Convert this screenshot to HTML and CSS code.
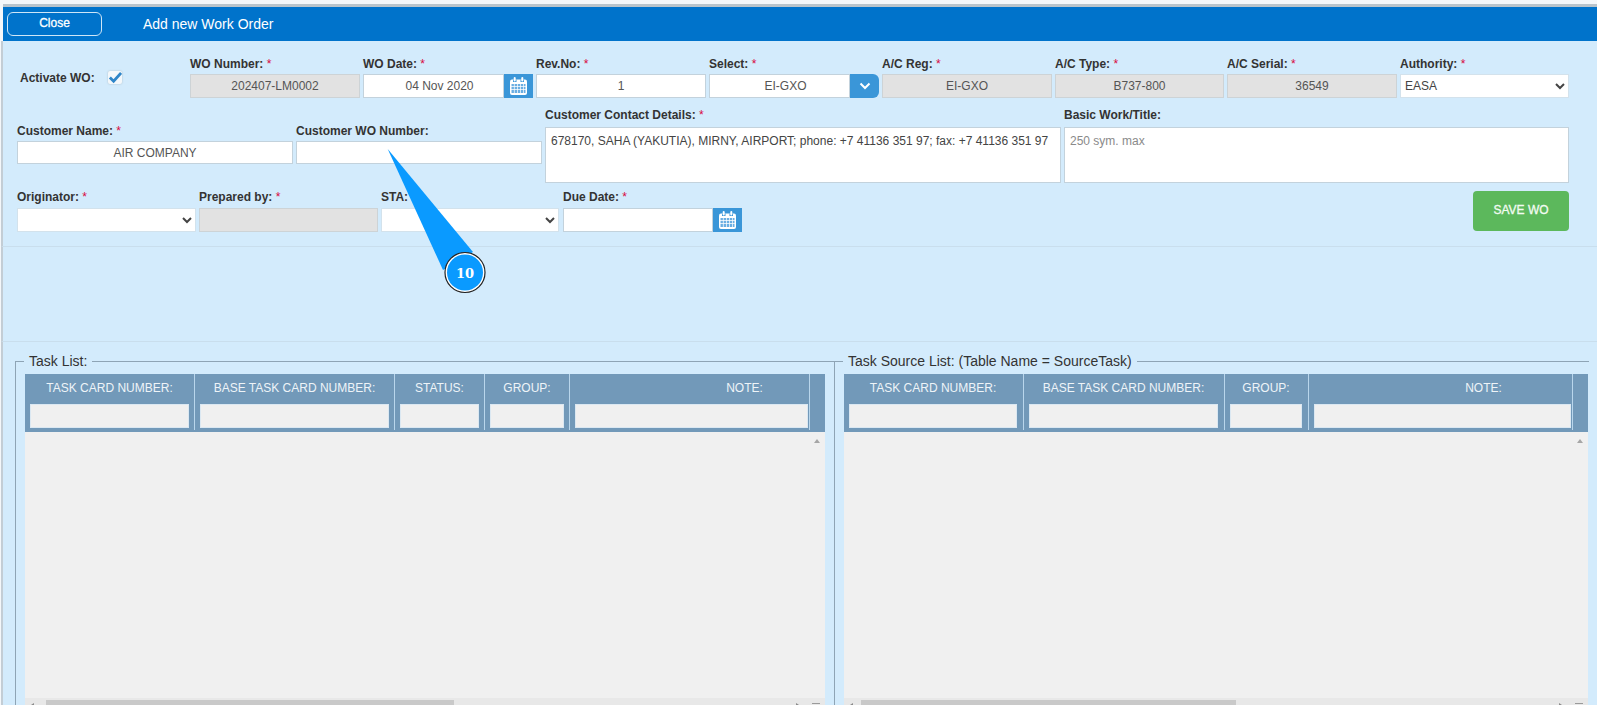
FILE: index.html
```html
<!DOCTYPE html>
<html lang="en">
<head>
<meta charset="utf-8">
<title>Add new Work Order</title>
<link rel="stylesheet" href="styles.css">
</head>
<body>
<div class="page">
  <svg width="0" height="0" class="defs" aria-hidden="true">
    <symbol id="cal" viewBox="0 0 17 18">
      <rect x="0" y="2.500" width="17" height="15.500" rx="2" fill="#fff"/>
      <path fill="#3a96d8" d="M3 2.500h3.500V5H3ZM10.500 2.500H14V5h-3.500Z"/>
      <path fill="#6aaee2" d="M1.500 7h2.400v2.300H1.500Zm3.100 0H7v2.300H4.600Zm3.100 0h2.400v2.300H7.700Zm3.100 0h2.400v2.300h-2.400Zm3.100 0h1.600v2.300h-1.600ZM1.500 10h2.400v2.300H1.500Zm3.100 0H7v2.300H4.600Zm3.100 0h2.400v2.300H7.700Zm3.100 0h2.400v2.300h-2.400Zm3.100 0h1.600v2.300h-1.600ZM1.500 13h2.400v3H1.500Zm3.100 0H7v3H4.600Zm3.100 0h2.400v3H7.700Zm3.100 0h2.400v3h-2.400Zm3.100 0h1.600v3h-1.600Z"/>
      <rect x="3.700" y="0" width="2" height="4.500" rx="1" fill="#fff"/>
      <rect x="11.300" y="0" width="2" height="4.500" rx="1" fill="#fff"/>
    </symbol>
  </svg>

  <header class="topbar">
    <button class="close-btn" type="button">Close</button>
    <h1 class="title">Add new Work Order</h1>
  </header>

  <form class="form">
    <div class="row-one">
      <div class="activate">
        <span class="label">Activate WO:</span>
        <span class="check">
          <svg width="15" height="13" viewBox="0 0 15 13"><path d="M2 6.500 6 10.500 14 1.500" fill="none" stroke="#2f86c9" stroke-width="3"/></svg>
        </span>
      </div>
      <div class="fields-eight">
        <div class="field"><label class="label">WO Number: <i>*</i></label><input class="ctl ro" value="202407-LM0002" readonly></div>
        <div class="field"><label class="label">WO Date: <i>*</i></label>
          <div class="group"><input class="ctl" value="04 Nov 2020"><span class="addon"><svg width="17" height="18"><use href="#cal"/></svg></span></div></div>
        <div class="field"><label class="label">Rev.No: <i>*</i></label><input class="ctl" value="1"></div>
        <div class="field"><label class="label">Select: <i>*</i></label>
          <div class="group"><input class="ctl" value="EI-GXO"><span class="addon addon-round"><svg width="12" height="8" viewBox="0 0 12 8"><path d="M1.500 1.500 6 6l4.500-4.500" fill="none" stroke="#fff" stroke-width="2"/></svg></span></div></div>
        <div class="field"><label class="label">A/C Reg: <i>*</i></label><input class="ctl ro" value="EI-GXO" readonly></div>
        <div class="field"><label class="label">A/C Type: <i>*</i></label><input class="ctl ro" value="B737-800" readonly></div>
        <div class="field"><label class="label">A/C Serial: <i>*</i></label><input class="ctl ro" value="36549" readonly></div>
        <div class="field"><label class="label">Authority: <i>*</i></label><select class="ctl sel"><option>EASA</option></select></div>
      </div>
    </div>

    <div class="row-two">
      <div class="field low w-name"><label class="label">Customer Name: <i>*</i></label><input class="ctl slim" value="AIR COMPANY"></div>
      <div class="field low w-cwo"><label class="label">Customer WO Number:</label><input class="ctl slim"></div>
      <div class="field w-contact"><label class="label label-wide">Customer Contact Details: <i>*</i></label><textarea class="area">678170, SAHA (YAKUTIA), MIRNY, AIRPORT; phone: +7 41136 351 97; fax: +7 41136 351 97</textarea></div>
      <div class="field w-basic"><label class="label label-wide">Basic Work/Title:</label><textarea class="area" placeholder="250 sym. max"></textarea></div>
    </div>

    <div class="row-three">
      <div class="field w-orig"><label class="label">Originator: <i>*</i></label><select class="ctl sel"><option></option></select></div>
      <div class="field w-prep"><label class="label">Prepared by: <i>*</i></label><input class="ctl ro" readonly></div>
      <div class="field w-sta"><label class="label">STA:</label><select class="ctl sel"><option></option></select></div>
      <div class="field w-due"><label class="label">Due Date: <i>*</i></label>
        <div class="group"><input class="ctl"><span class="addon"><svg width="17" height="18"><use href="#cal"/></svg></span></div></div>
      <button class="save-btn" type="button">SAVE WO</button>
    </div>
  </form>

  <div class="spacer"></div>

  <section class="lists">
    <fieldset class="box box-tasks">
      <legend>Task List:</legend>
      <div class="panel">
        <div class="grid-head head-tasks">
          <div class="cell"><span class="cap">TASK CARD NUMBER:</span><span class="filter"></span></div>
          <div class="cell"><span class="cap">BASE TASK CARD NUMBER:</span><span class="filter"></span></div>
          <div class="cell"><span class="cap">STATUS:</span><span class="filter"></span></div>
          <div class="cell"><span class="cap">GROUP:</span><span class="filter"></span></div>
          <div class="cell cell-note"><span class="cap cap-note">NOTE:</span><span class="filter"></span></div>
          <div></div>
        </div>
        <div class="grid-body">
          <span class="arrow-up"></span>
          <div class="hscroll">
            <span class="thumb thumb-tasks"></span>
            <span class="arrow-left"></span>
            <span class="arrow-right"></span>
            <span class="corner"></span>
          </div>
        </div>
      </div>
    </fieldset>
    <fieldset class="box box-source">
      <legend>Task Source List: (Table Name = SourceTask)</legend>
      <div class="panel">
        <div class="grid-head head-source">
          <div class="cell"><span class="cap">TASK CARD NUMBER:</span><span class="filter"></span></div>
          <div class="cell"><span class="cap">BASE TASK CARD NUMBER:</span><span class="filter"></span></div>
          <div class="cell"><span class="cap">GROUP:</span><span class="filter"></span></div>
          <div class="cell cell-note"><span class="cap cap-note-src">NOTE:</span><span class="filter"></span></div>
          <div></div>
        </div>
        <div class="grid-body">
          <span class="arrow-up"></span>
          <div class="hscroll">
            <span class="thumb thumb-source"></span>
            <span class="arrow-left"></span>
            <span class="arrow-right"></span>
            <span class="corner"></span>
          </div>
        </div>
      </div>
    </fieldset>
  </section>

  <svg class="callout" width="110" height="150" viewBox="380 145 110 150" aria-label="Callout 10">
    <polygon points="387.700,149 443,270 473,252" fill="#0a9aff"/>
    <circle cx="465" cy="272.500" r="20" fill="#fff" stroke="#222" stroke-width="1.200"/>
    <circle cx="465" cy="272.500" r="18" fill="#0a9aff"/>
    <text x="465" y="277.500" class="callout-num" text-anchor="middle">10</text>
  </svg>
</div>
</body>
</html>
```
FILE: styles.css
```css
* { box-sizing: border-box; }

html, body {
  margin: 0;
  height: 705px;
  overflow: hidden;
}

body {
  background: #f4f7fa;
  font-family: "Liberation Sans", Arial, sans-serif;
  font-size: 12px;
  color: #333;
}

.defs { position: absolute; }

.page {
  position: relative;
  height: 705px;
  overflow: hidden;
  padding-top: 4px;
  padding-left: 1px;
  display: flex;
  flex-direction: column;
}

.topbar {
  flex: none;
  height: 37px;
  margin-left: 2px;
  border-top: 3px solid #b9c4cc;
  background: #0073cb;
  display: flex;
  align-items: center;
  padding-left: 4px;
}

.close-btn {
  width: 95px;
  height: 24px;
  padding: 0 0 3px;
  border: 1px solid #cfe6f7;
  border-radius: 6px;
  background: transparent;
  color: #fff;
  font: 12px "Liberation Sans", Arial, sans-serif;
  -webkit-text-stroke: .3px #fff;
}

.title {
  margin: 0 0 0 41px;
  font-size: 14px;
  font-weight: normal;
  color: #fff;
}

.form {
  flex: none;
  height: 206px;
  border-left: 2px solid #c3cdd5;
  border-bottom: 1px solid #c9deed;
  background: #d3ebfc;
  padding: 16px 28px 0 14px;
}

.label {
  display: block;
  height: 14px;
  line-height: 14px;
  font-weight: bold;
  color: #333;
  white-space: nowrap;
}
.label i {
  font-style: normal;
  font-weight: normal;
  color: #d9083c;
}

.field { display: flex; flex-direction: column; gap: 3px; }
.group { display: flex; }
.group .ctl { flex: 1; min-width: 0; padding-left: 16px; }

.ctl {
  width: 100%;
  height: 24px;
  border: 1px solid #c3d2dc;
  background: #fff;
  color: #555;
  font: 12px "Liberation Sans", Arial, sans-serif;
  text-align: center;
  padding: 0 4px;
  outline: none;
  border-radius: 0;
}
.ro { background: #e2e2e2; border-color: #cdd3d6; }
.slim { height: 23px; }
.sel { text-align: left; padding: 0; color: #444; border-color: #d3e2ec; }

.addon {
  flex: none;
  width: 29px;
  height: 24px;
  background: #3a96d8;
  display: flex;
  align-items: center;
  justify-content: center;
}
.addon-round { border-radius: 0 6px 6px 0; }

.row-one { display: flex; height: 41px; }
.activate {
  flex: none;
  width: 173px;
  padding: 14px 0 0 3px;
  display: flex;
  align-items: flex-start;
}
.activate .label { width: 88px; }
.check {
  width: 14px;
  height: 13px;
  background: #f4f8fb;
  border-radius: 2px;
  box-shadow: 0 0 2px #a9bac6;
  display: flex;
  align-items: center;
  justify-content: center;
}
.fields-eight {
  display: grid;
  grid-template-columns: 170px 170px 170px 170px 170px 169px 170px 169px;
  column-gap: 3px;
}

.row-two {
  display: flex;
  margin-top: 10px;
  height: 75px;
}
.low { padding-top: 16px; }
.w-name { width: 276px; margin-right: 3px; }
.w-cwo { width: 246px; margin-right: 3px; }
.w-contact { width: 516px; margin-right: 3px; }
.w-basic { width: 505px; }
.label-wide { margin-bottom: 2px; }

.area {
  width: 100%;
  height: 56px;
  resize: none;
  border: 1px solid #c3d2dc;
  background: #fff;
  color: #444;
  font: 12px "Liberation Sans", Arial, sans-serif;
  padding: 6px 5px;
  outline: none;
}
.area::placeholder { color: #8a8a8a; opacity: 1; }

.row-three {
  display: flex;
  margin-top: 7px;
}
.row-three .field { gap: 4px; }
.w-orig { width: 179px; margin-right: 3px; }
.w-prep { width: 179px; margin-right: 3px; }
.w-sta { width: 178px; margin-right: 4px; }
.w-due { width: 179px; }

.save-btn {
  margin-left: auto;
  margin-top: 1px;
  width: 96px;
  height: 40px;
  border: 0;
  border-radius: 4px;
  background: #5cb85c;
  color: #f2fbf2;
  font: 12px "Liberation Sans", Arial, sans-serif;
  -webkit-text-stroke: .3px #f2fbf2;
  padding: 0 0 3px;
}

.spacer {
  flex: none;
  height: 95px;
  border-left: 2px solid #c3cdd5;
  border-bottom: 1px solid #c9deed;
  background: #d3ebfc;
}

.lists {
  flex: 1;
  min-height: 0;
  border-left: 2px solid #c3cdd5;
  background: #d3ebfc;
  padding: 11px 8px 0 12px;
  display: flex;
}

.box {
  margin: 0;
  min-width: 0;
  border: 0;
  border-top: 1px solid #8ea4b5;
  border-left: 1px solid #8ea4b5;
  padding: 5px 0 0 9px;
}
.box legend {
  margin-left: -1px;
  padding: 0 5px;
  font-size: 14px;
  line-height: 16px;
  color: #333;
}
.box-tasks { flex: none; width: 819px; padding-right: 9px; }
.box-source { flex: none; width: 755px; padding-right: 1px; }

.panel {
  height: 331px;
  display: flex;
  flex-direction: column;
}

.grid-head {
  flex: none;
  height: 58px;
  background: #7299b9;
  display: grid;
  grid-template-rows: 56px;
}
.head-tasks { grid-template-columns: 170px 200px 90px 85px 240px 15px; }
.head-source { grid-template-columns: 180px 201px 84px 264px 15px; }
.head-source .cell { padding-right: 6px; }
.head-source .cell-note { padding-right: 1px; }

.cell {
  border-right: 1px solid #b9d6ec;
  padding: 0 5px;
  display: flex;
  flex-direction: column;
}
.cell-note { padding-right: 1px; }

.cap {
  height: 30px;
  line-height: 29px;
  text-align: center;
  color: #eef4f8;
  font-size: 12px;
  white-space: nowrap;
}
.cap-note { padding-left: 106px; }
.cap-note-src { padding-left: 82px; }

.filter {
  display: block;
  height: 24px;
  background: #f0f0f0;
  border: 1px solid #dbe8f2;
}

.grid-body {
  position: relative;
  flex: 1;
  background: #f0f0f0;
  display: flex;
  flex-direction: column;
  justify-content: flex-end;
}

.arrow-up {
  position: absolute;
  top: 7px;
  right: 5px;
  border: 3.500px solid transparent;
  border-top: 0;
  border-bottom: 4px solid #a6a6a6;
}

.hscroll {
  position: relative;
  flex: none;
  height: 7px;
  background: #e8e8e8;
  padding-top: 2px;
}
.thumb {
  display: block;
  height: 5px;
  background: #c9c9c9;
}
.thumb-tasks { margin-left: 21px; width: 408px; }
.thumb-source { margin-left: 17px; width: 375px; }

.arrow-left {
  position: absolute;
  left: 6px;
  top: 5px;
  border: 2px solid transparent;
  border-left: 0;
  border-right: 3px solid #8a8a8a;
}
.arrow-right {
  position: absolute;
  right: 26px;
  top: 5px;
  border: 2px solid transparent;
  border-right: 0;
  border-left: 3px solid #8a8a8a;
}
.corner {
  position: absolute;
  right: 5px;
  top: 5px;
  width: 8px;
  height: 1px;
  background: #9a9a9a;
}

.callout {
  position: absolute;
  left: 380px;
  top: 145px;
}
.callout-num {
  font: bold 13px "DejaVu Serif", "Liberation Serif", serif;
  fill: #fff;
}
```
